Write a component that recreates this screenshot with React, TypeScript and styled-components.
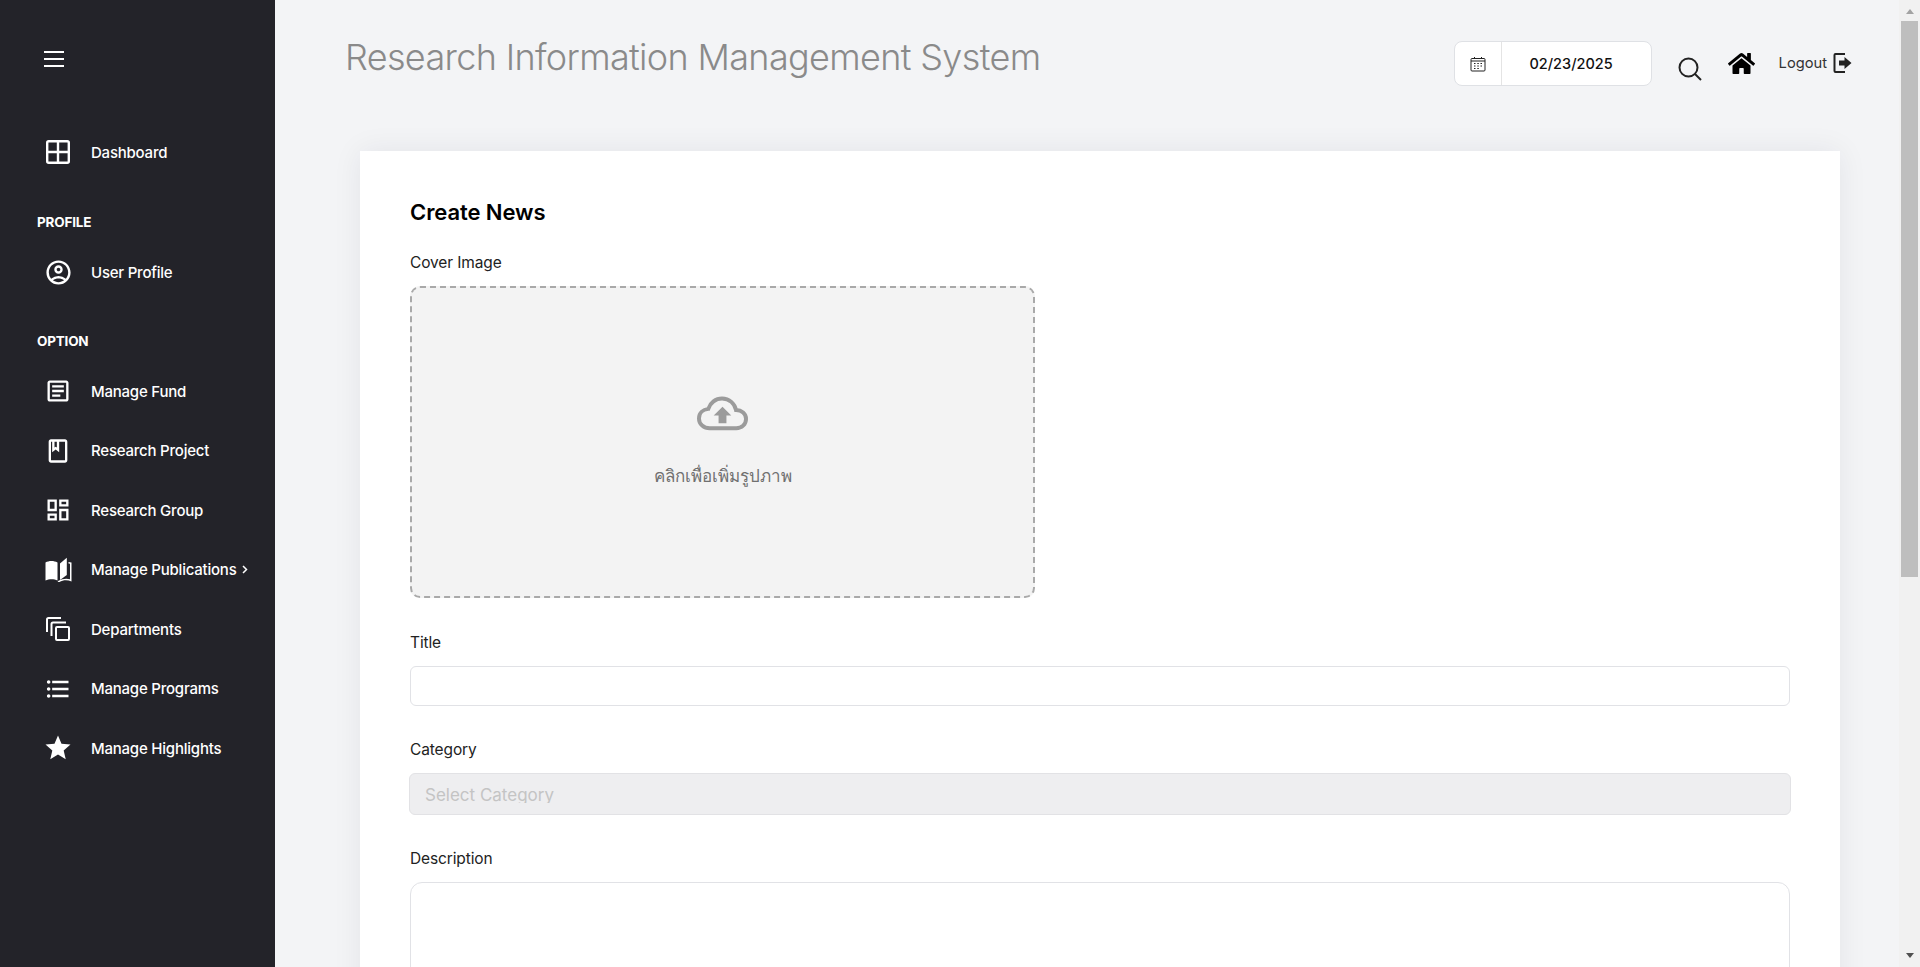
import React from 'react';
import styled, { createGlobalStyle } from 'styled-components';
import {
  MdOutlineAccountCircle,
  MdOutlineArticle,
  MdOutlineBook,
  MdOutlineDashboard,
  MdFormatListBulleted,
  MdStar,
} from 'react-icons/md';
import { FaHome } from 'react-icons/fa';

const FONT = `Inter, "Noto Sans", "Liberation Sans", sans-serif`;

const Global = createGlobalStyle`
  html { background: #f3f4f6; scrollbar-width: none; }
  html::-webkit-scrollbar { display: none; }
  body { margin: 0; background: #f3f4f6; font-family: ${FONT}; color: #111; }
  * { box-sizing: border-box; }
`;

const Sidebar = styled.aside`
  position: fixed;
  inset: 0 auto 0 0;
  width: 275px;
  background: #232329;
  color: #fff;
  padding: 51px 0 0 37px;
`;

const Burger = styled.button`
  display: flex;
  flex-direction: column;
  gap: 5px;
  width: 20px;
  margin: 0 0 73px 7px;
  padding: 0;
  background: none;
  border: 0;
  span { display: block; height: 2px; background: #fff; }
`;

const Section = styled.div<{ $top: number }>`
  font-size: 13.5px;
  font-weight: 700;
  line-height: 20px;
  letter-spacing: -0.2px;
  margin-top: ${(p) => p.$top}px;
`;

const NavItem = styled.a<{ $h?: number; $top?: number }>`
  display: flex;
  align-items: center;
  height: ${(p) => p.$h ?? 59.5}px;
  margin-top: ${(p) => p.$top ?? 0}px;
  font-size: 15px;
  font-weight: 450;
  letter-spacing: -0.22px;
  color: #fff;
  white-space: nowrap;
`;

const NavIcon = styled.span`
  display: flex;
  align-items: center;
  justify-content: center;
  width: 28px;
  margin: 0 19px 0 7px;
  svg { display: block; flex: none; }
`;

const Chevron = styled.svg`
  margin-left: 5px;
`;

const Rail = styled.div`
  position: fixed;
  inset: 0 0 0 auto;
  width: 21px;
  background: #f1f1f1;
  display: flex;
  flex-direction: column;
  align-items: center;
  padding-top: 9px;
`;

const ArrowUp = styled.span`
  width: 0;
  height: 0;
  border: solid transparent;
  border-width: 0 4.5px 5px;
  border-bottom-color: #a3a3a3;
`;

const Thumb = styled.span`
  width: 17px;
  height: 556px;
  margin-top: 7px;
  background: #bebebe;
`;

const ArrowDown = styled.span`
  width: 0;
  height: 0;
  margin-top: auto;
  margin-bottom: 9px;
  border: solid transparent;
  border-width: 5px 4.5px 0;
  border-top-color: #505050;
`;

const Main = styled.main`
  margin-left: 275px;
  padding: 0 80px 0 70px;
  height: 1622px;
`;

const Header = styled.header`
  display: flex;
  align-items: flex-start;
  justify-content: space-between;
  height: 151px;
`;

const Title = styled.h1`
  margin: 33px 0 0;
  font-size: 36px;
  line-height: 48px;
  font-weight: 300;
  letter-spacing: -0.66px;
  color: #8a8a8a;
  white-space: nowrap;
`;

const Tools = styled.div`
  display: flex;
  align-items: flex-start;
  margin-top: 41px;
  margin-right: -12px;
`;

const DateBox = styled.div`
  display: flex;
  align-items: stretch;
  width: 198px;
  height: 45px;
  background: #fff;
  border: 1px solid #dfe1e5;
  border-radius: 8px;
  margin-right: 26px;
`;

const DateIcon = styled.span`
  display: flex;
  align-items: center;
  justify-content: center;
  width: 47px;
  border-right: 1px solid #e4e4e4;
`;

const DateValue = styled.span`
  flex: 1;
  display: flex;
  align-items: center;
  justify-content: center;
  font-size: 14.5px;
  font-weight: 500;
  color: #111;
  padding-right: 10px;
`;

const IconLink = styled.a<{ $t: number; $r: number }>`
  display: block;
  margin: ${(p) => p.$t}px ${(p) => p.$r}px 0 0;
  line-height: 0;
  color: #000;
`;

const Logout = styled.a`
  display: flex;
  align-items: center;
  gap: 5px;
  margin-top: 10px;
  height: 23px;
  font-size: 14.7px;
  font-weight: 400;
  color: #333;
`;

const Card = styled.section`
  width: 1480px;
  margin-left: 15px;
  background: #fff;
  padding: 45px 50px 40px;
  box-shadow: 0 0 28px rgba(30, 35, 60, 0.07);
`;

const CardTitle = styled.h2`
  margin: 0 0 23px;
  font-size: 22px;
  line-height: 32px;
  font-weight: 600;
  letter-spacing: -0.08px;
  color: #000;
`;

const Label = styled.label`
  display: block;
  font-size: 15.5px;
  line-height: 24px;
  font-weight: 400;
  letter-spacing: -0.12px;
  color: #222;
  margin-bottom: 11px;
`;

const Upload = styled.div`
  display: flex;
  flex-direction: column;
  align-items: center;
  width: 625px;
  height: 312px;
  margin-top: 1px;
  background: #f3f3f3;
  border: 2px dashed #a9a9a9;
  border-radius: 10px;
  padding-top: 108px;
  margin-bottom: 33px;
`;

const UploadText = styled.span`
  margin-top: 33px;
  font-size: 17px;
  line-height: 24px;
  font-weight: 500;
  color: #707070;
`;

const Field = styled.div<{ $mb: number }>`
  margin-bottom: ${(p) => p.$mb}px;
`;

const TextInput = styled.input`
  display: block;
  width: 100%;
  height: 40px;
  background: #fff;
  border: 1px solid #e1e2e6;
  border-radius: 6px;
  outline: none;
`;

const SelectBox = styled.select`
  display: block;
  width: calc(100% + 2px);
  height: 42px;
  margin-left: -1px;
  padding: 11px 15px;
  appearance: none;
  background: #eeeef0;
  border: 1px solid #e2e2e5;
  border-radius: 6px;
  font-family: ${FONT};
  font-size: 17px;
  color: #c4c4c4;
  opacity: 1;
`;

const TextArea = styled.textarea`
  display: block;
  width: 100%;
  height: 200px;
  background: #fff;
  border: 1px solid #e1e2e6;
  border-radius: 12px;
  outline: none;
  resize: none;
`;

const nav = [
  { label: 'Manage Fund', icon: <MdOutlineArticle size={28} /> },
  { label: 'Research Project', icon: <MdOutlineBook size={28} /> },
  { label: 'Research Group', icon: <MdOutlineDashboard size={28} /> },
  {
    label: 'Manage Publications',
    chevron: true,
    icon: (
      <svg width="27" height="26" viewBox="0 0 27 26" fill="#fff">
        <path d="M.5 5.500C4 3.400 9 3.500 12.500 5.500V23.500C9 21.700 4 21.800.5 23.500Z" />
        <path d="M15 6.500 21.800 .8V18L15 23Z" />
        <path d="M23.500 5 26.500 5.600V24.500C22.500 22.700 18 23 14.500 25H12.500L13.500 23.800C17 21.800 21.500 21.300 25 22.300V6.800L23.500 6.500Z" />
      </svg>
    ),
  },
  {
    label: 'Departments',
    icon: (
      <svg width="24" height="24" viewBox="0 0 24 24" fill="none" stroke="#fff" strokeWidth="2">
        <rect x="10" y="10" width="13" height="13" rx="1" />
        <path d="M1 15V2.500A1.500 1.500 0 0 1 2.500 1H15" />
        <path d="M5.500 19V7A1.500 1.500 0 0 1 7 5.500H20" />
      </svg>
    ),
  },
  { label: 'Manage Programs', icon: <MdFormatListBulleted size={28} /> },
  { label: 'Manage Highlights', icon: <MdStar size={30} /> },
];

export default function App() {
  return (
    <>
      <Global />
      <Sidebar>
        <Burger aria-label="menu"><span /><span /><span /></Burger>
        <NavItem $h={24}>
          <NavIcon>
            <svg width="24" height="24" viewBox="0 0 24 24" fill="none" stroke="#fff" strokeWidth="2.400">
              <rect x="1.200" y="1.200" width="21.600" height="21.600" rx="1.500" />
              <path d="M12 1V23M1 12H23" />
            </svg>
          </NavIcon>
          Dashboard
        </NavItem>
        <Section $top={48}>PROFILE</Section>
        <NavItem $h={24} $top={28.5}>
          <NavIcon><MdOutlineAccountCircle size={29} /></NavIcon>
          User Profile
        </NavItem>
        <Section $top={46}>OPTION</Section>
        <NavItem $top={11}>
          <NavIcon>{nav[0].icon}</NavIcon>{nav[0].label}
        </NavItem>
        {nav.slice(1).map((n) => (
          <NavItem key={n.label}>
            <NavIcon>{n.icon}</NavIcon>
            {n.label}
            {n.chevron && (
              <Chevron width="6" height="9" viewBox="0 0 6 9" fill="none" stroke="#fff" strokeWidth="1.500">
                <path d="M1 1l3.500 3.500L1 8" />
              </Chevron>
            )}
          </NavItem>
        ))}
      </Sidebar>
      <Main>
        <Header>
          <Title>Research Information Management System</Title>
          <Tools>
            <DateBox>
              <DateIcon>
                <svg width="16" height="16" viewBox="0 0 16 16" fill="none" stroke="#222" strokeWidth="1">
                  <rect x="1" y="2.500" width="14" height="12.500" rx="1" />
                  <path d="M1 5H15M4.500 1V3M11.500 1V3" />
                  <path d="M4 7.500h1.500M7.300 7.500h1.500M10.500 7.500h1.500M4 10h1.500M7.300 10h1.500M10.500 10h1.500M4 12.500h1.500M7.300 12.500h1.500" strokeWidth="1.200" />
                </svg>
              </DateIcon>
              <DateValue>02/23/2025</DateValue>
            </DateBox>
            <IconLink $t={16} $r={26} aria-label="search">
              <svg width="24" height="24" viewBox="0 0 24 24" fill="none" stroke="#222" strokeWidth="2">
                <circle cx="10.500" cy="10.500" r="9" />
                <path d="M17 17l6 6" />
              </svg>
            </IconLink>
            <IconLink $t={9} $r={24} aria-label="home"><FaHome size={27} /></IconLink>
            <Logout>
              Logout
              <svg width="20" height="22" viewBox="0 0 20 22" fill="#222">
                <path d="M13 1H3.500A2 2 0 0 0 1.500 3V19A2 2 0 0 0 3.500 21H13V19H3.500V3H13Z" />
                <path d="M7 8.500H12.500V5L19.500 11 12.500 17V13.500H7Z" />
              </svg>
            </Logout>
          </Tools>
        </Header>
        <Card>
          <CardTitle>Create News</CardTitle>
          <Label>Cover Image</Label>
          <Upload>
            <svg width="51" height="35" viewBox="0 0 52 35" fill="none">
              <path
                d="M13 32.500C7 32.500 2 28.500 2 22.500 2 17 6 13.500 11.500 12.800 13.500 6.500 19 2.200 25.500 2.200 33 2.200 38.500 7.500 39.800 14 45.500 14 50 17.500 50 23 50 28.500 45.500 32.500 40 32.500Z"
                stroke="#9b9b9b"
                strokeWidth="4"
              />
              <path d="M26 10.500 35 19.500H30V27.500H22V19.500H17Z" fill="#9b9b9b" />
            </svg>
            <UploadText>คลิกเพื่อเพิ่มรูปภาพ</UploadText>
          </Upload>
          <Field $mb={32}>
            <Label>Title</Label>
            <TextInput />
          </Field>
          <Field $mb={32}>
            <Label>Category</Label>
            <SelectBox disabled defaultValue="">
              <option value="">Select Category</option>
            </SelectBox>
          </Field>
          <Field $mb={30}>
            <Label>Description</Label>
            <TextArea />
          </Field>
        </Card>
      </Main>
      <Rail>
        <ArrowUp />
        <Thumb />
        <ArrowDown />
      </Rail>
    </>
  );
}
